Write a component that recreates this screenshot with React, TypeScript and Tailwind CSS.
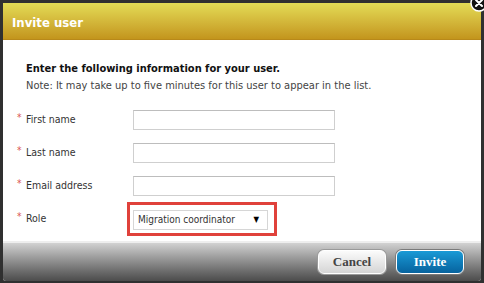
import React from "react";

const FONT = '"DejaVu Sans Condensed", "DejaVu Sans", Verdana, sans-serif';

const Row = ({ label, children }: { label: string; children: React.ReactNode }) => (
  <div className="flex items-center h-[33px]">
    <span className="w-[9px] text-[#d9534f] text-[10px] leading-none ml-[17px] -mt-[3px]">*</span>
    <span className="w-[107px] text-[10.5px] text-[#333]">{label}</span>
    {children}
  </div>
);

const Input = () => (
  <div className="w-[202px] h-[20px] bg-white border border-[#cfcfcf] border-t-[#bdbdbd]" />
);

export default function App() {
  return (
    <div
      className="relative w-[484px] h-[283px] bg-[#303030] overflow-hidden p-[3px]"
      style={{ fontFamily: FONT, fontStretch: "condensed" }}
    >
      <div className="flex flex-col h-[278px] w-[478px] bg-white rounded-b-[3px] overflow-hidden">
        <div className="h-[37px] shrink-0 bg-gradient-to-b from-[#e3dc55] to-[#c3951c] border-b border-[#b8891a] flex items-center pl-[9px] pt-[3px]">
          <span className="text-white font-bold text-[13px]">Invite user</span>
        </div>
        <div className="flex-1 pt-[21px]">
          <div className="pl-[23px] text-[11px] font-bold text-[#111] leading-[16px]">
            Enter the following information for your user.
          </div>
          <div className="pl-[23px] text-[11px] text-[#444] leading-[16px] mt-[1px]">
            Note: It may take up to five minutes for this user to appear in the list.
          </div>
          <div className="mt-[9px] -ml-[3px]">
            <Row label="First name"><Input /></Row>
            <Row label="Last name"><Input /></Row>
            <Row label="Email address"><Input /></Row>
            <Row label="Role">
              <div className="-ml-[6px] border-[3px] border-[#e0413b] pl-[3px] pr-[6px] pt-[5px] pb-[3px]">
                <div className="w-[135px] h-[20px] bg-white border border-[#d6d6d6] flex items-center justify-between pl-[4px] pr-[8px]">
                  <span className="text-[10px] text-[#333] whitespace-nowrap">Migration coordinator</span>
                  <span className="text-[8px] text-black">▼</span>
                </div>
              </div>
            </Row>
          </div>
        </div>
        <div className="h-[40px] shrink-0 border-t-2 border-[#eeeeee] bg-gradient-to-b from-[#d2d2d2] to-[#4c4c4c] flex items-center justify-end gap-[10px] pr-[17px]">
          <button
            className="w-[68px] h-[24px] rounded-[6px] border border-white bg-gradient-to-b from-[#fbfbfb] to-[#d5d5d5] text-[#444] font-bold text-[13px] shadow-[0_0_0_1px_#9a9a9a]"
            style={{ fontFamily: '"Liberation Serif", "Times New Roman", serif' }}
          >
            Cancel
          </button>
          <button
            className="w-[68px] h-[24px] rounded-[6px] border border-white bg-gradient-to-b from-[#1a9ad6] to-[#07639e] text-white font-bold text-[13px] shadow-[0_0_0_1px_#7a7a7a]"
            style={{ fontFamily: '"Liberation Serif", "Times New Roman", serif' }}
          >
            Invite
          </button>
        </div>
      </div>
      <svg className="absolute right-[-4px] top-[-6px]" width="18" height="18" viewBox="0 0 18 18">
        <circle cx="9" cy="9" r="8" fill="#111" stroke="#fff" strokeWidth="1.5" />
        <path d="M6 6 L12 12 M12 6 L6 12" stroke="#fff" strokeWidth="2" strokeLinecap="round" />
      </svg>
    </div>
  );
}
